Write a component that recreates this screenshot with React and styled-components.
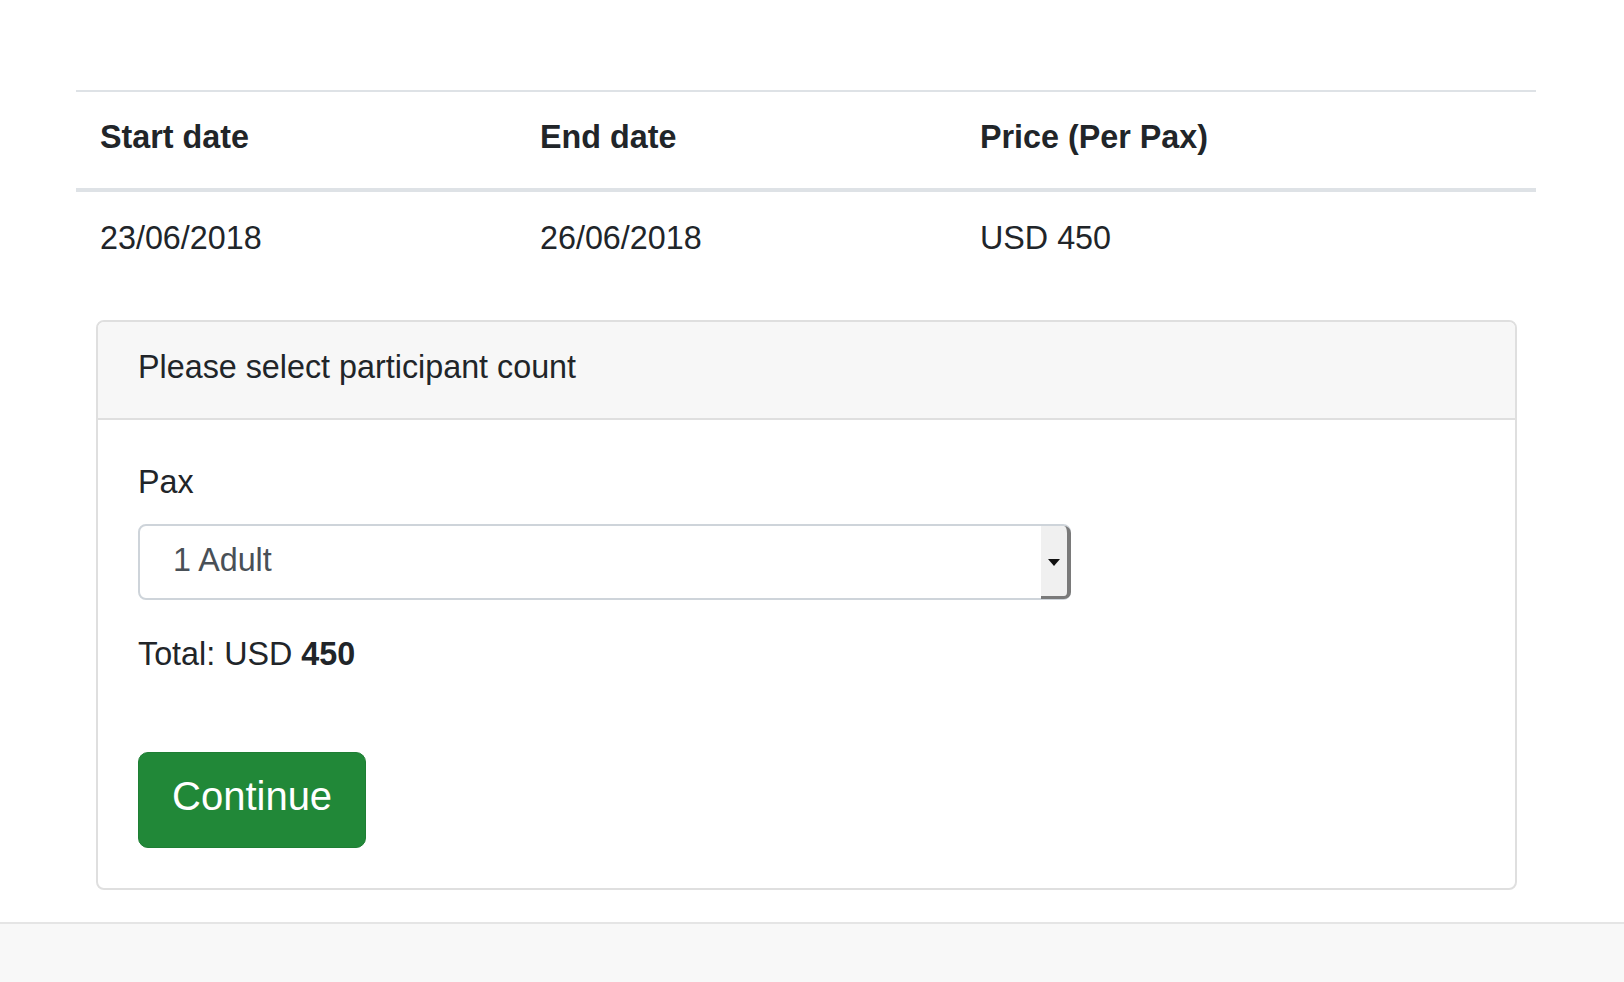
import React from 'react';
import styled, { createGlobalStyle } from 'styled-components';

const GlobalStyle = createGlobalStyle`
  html, body {
    margin: 0;
    padding: 0;
    background: #fff;
  }
  body {
    font-family: "Helvetica Neue", Helvetica, "Liberation Sans", Arial, sans-serif;
    font-size: 32.3px;
    line-height: 48px;
    color: #212529;
  }
  * {
    box-sizing: border-box;
  }
`;

const dates = [{ start: '23/06/2018', end: '26/06/2018', price: 'USD 450' }];

const App = () => {
  return (
    <Page>
      <GlobalStyle />
      <Main>
        <Table>
          <colgroup>
            <col style={{ width: '440px' }} />
            <col style={{ width: '440px' }} />
            <col />
          </colgroup>
          <thead>
            <tr>
              <th>Start date</th>
              <th>End date</th>
              <th>Price (Per Pax)</th>
            </tr>
          </thead>
          <tbody>
            {dates.map((d) => (
              <tr key={d.start}>
                <td>{d.start}</td>
                <td>{d.end}</td>
                <td>{d.price}</td>
              </tr>
            ))}
          </tbody>
        </Table>

        <Card>
          <CardHeader>Please select participant count</CardHeader>
          <CardBody>
            <Label htmlFor='pax'>Pax</Label>
            <SelectWrap>
              <Select id='pax' defaultValue='1'>
                <option value='1'>1 Adult</option>
                <option value='2'>2 Adults</option>
                <option value='3'>3 Adults</option>
              </Select>
              <Arrow aria-hidden='true'>
                <span />
              </Arrow>
            </SelectWrap>
            <Total>
              Total: USD <strong>450</strong>
            </Total>
            <Actions>
              <Button type='button'>Continue</Button>
            </Actions>
          </CardBody>
        </Card>
      </Main>
      <Footer />
    </Page>
  );
};

const Page = styled.div`
  min-height: 100vh;
  display: flex;
  flex-direction: column;
`;

const Main = styled.main`
  width: 1460px;
  margin-left: 76px;
  padding-top: 90px;
`;

const Table = styled.table`
  width: 100%;
  border-collapse: collapse;
  margin-bottom: 32px;
  table-layout: fixed;
  th,
  td {
    text-align: left;
    padding: 22px 24px 26px;
    line-height: 48px;
    vertical-align: top;
    border-top: 2px solid #dee2e6;
  }
  th {
    font-weight: 700;
    padding-top: 21px;
    padding-bottom: 27px;
    border-bottom: 4px solid #dee2e6;
  }
`;

const Card = styled.section`
  margin: 0 19px 32px 20px;
  border: 2px solid #dfdfdf;
  border-radius: 8px;
  background: #fff;
`;

const CardHeader = styled.div`
  padding: 21px 40px 27px;
  background: #f7f7f7;
  border-bottom: 2px solid #dfdfdf;
  border-radius: 6px 6px 0 0;
`;

const CardBody = styled.div`
  padding: 38px 40px 40px;
`;

const Label = styled.label`
  display: block;
  margin-bottom: 18px;
`;

const SelectWrap = styled.div`
  position: relative;
  width: 933px;
  margin-bottom: 30px;
`;

const Select = styled.select`
  appearance: none;
  -webkit-appearance: none;
  display: block;
  width: 100%;
  height: 76px;
  padding: 0 40px 4px 33px;
  font: inherit;
  color: #495057;
  background: #fff;
  border: 2px solid #ced4da;
  border-radius: 8px;
  outline: none;
`;

const Arrow = styled.div`
  position: absolute;
  top: 2px;
  right: 0;
  bottom: 1px;
  width: 30px;
  background: #f0f0f0;
  border-right: 4px solid #7a7a7a;
  border-bottom: 3px solid #7a7a7a;
  border-radius: 0 7px 7px 0;
  pointer-events: none;
  display: flex;
  align-items: center;
  justify-content: center;
  span {
    width: 0;
    height: 0;
    border-left: 6px solid transparent;
    border-right: 6px solid transparent;
    border-top: 7px solid #111;
    margin-top: 2px;
  }
`;

const Total = styled.p`
  margin: 0;
  strong {
    font-weight: 700;
  }
`;

const Actions = styled.div`
  margin-top: 74px;
`;

const Button = styled.button`
  display: inline-block;
  font-family: inherit;
  font-size: 40px;
  line-height: 62px;
  padding: 12px 33px 20px;
  color: #fff;
  background: #218838;
  border: 1px solid #1e7e34;
  border-radius: 10px;
  cursor: pointer;
`;

const Footer = styled.footer`
  flex: 1;
  min-height: 60px;
  background: #f8f8f8;
  border-top: 2px solid #e5e5e5;
`;

export default App;
